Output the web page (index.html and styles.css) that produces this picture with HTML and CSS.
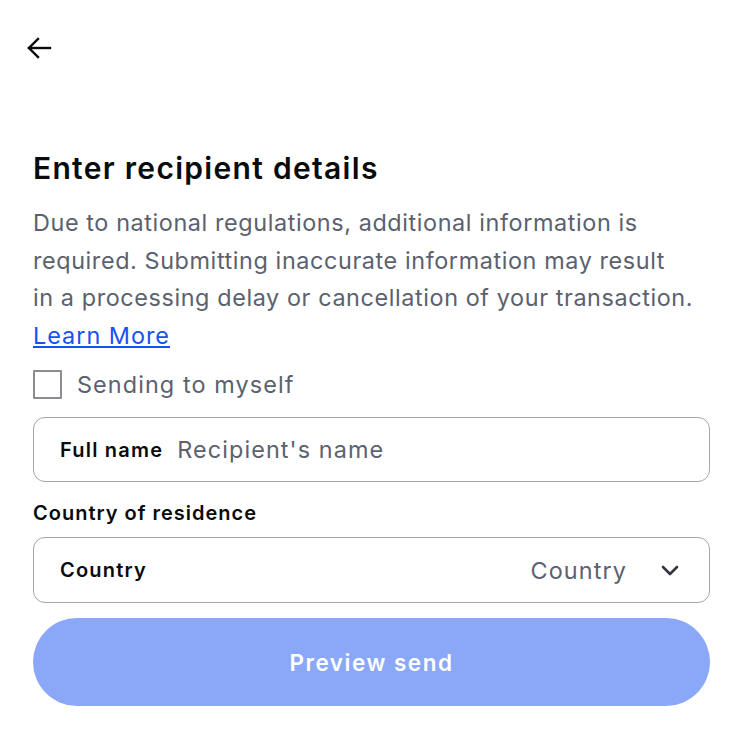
FILE: index.html
```html
<!DOCTYPE html>
<html lang="en">
<head>
    <meta charset="UTF-8">
    <meta name="viewport" content="width=device-width, initial-scale=1.0">
    <title>Enter recipient details</title>
    <link rel="stylesheet" href="styles.css">
</head>
<body>
    <div class="page">
        <button class="back" aria-label="Back">
            <svg width="28" height="28" viewBox="0 0 28 28" fill="none" stroke="#0a0b0d" stroke-width="2.4" stroke-linecap="square">
                <path d="M25 14H4"/>
                <path d="M13 5l-9 9 9 9"/>
            </svg>
        </button>

        <h1>Enter recipient details</h1>
        <p class="intro">
            Due to national regulations, additional information is<br>
            required. Submitting inaccurate information may result<br>
            in a processing delay or cancellation of your transaction.
            <a href="#">Learn More</a>
        </p>

        <label class="check">
            <span class="box"></span>
            <span>Sending to myself</span>
        </label>

        <div class="field">
            <span class="field-label">Full name</span>
            <span class="placeholder">Recipient's name</span>
        </div>

        <div class="section-label">Country of residence</div>
        <div class="field select">
            <span class="field-label">Country</span>
            <span class="placeholder">Country</span>
            <svg class="chevron" width="22" height="22" viewBox="0 0 22 22" fill="none" stroke="#32353d" stroke-width="2.6" stroke-linecap="round" stroke-linejoin="round">
                <path d="M4 8l7 7 7-7"/>
            </svg>
        </div>

        <button class="primary">Preview send</button>
    </div>
</body>
</html>
```

FILE: styles.css
```css
body {
    margin: 0;
    background: #fff;
    font-family: 'Inter', 'Noto Sans', sans-serif;
    color: #0a0b0d;
}

.page {
    padding: 34px 30px 0 33px;
}

.back {
    display: block;
    background: none;
    border: none;
    padding: 0;
    margin-left: -8px;
    width: 28px;
    height: 28px;
    cursor: pointer;
}

h1 {
    margin: 86px 0 0;
    font-size: 30px;
    font-weight: 600;
    letter-spacing: 1.3px;
    line-height: 40px;
}

.intro {
    margin: 16px -30px 0 0;
    font-size: 23.4px;
    line-height: 37.6px;
    letter-spacing: 0.6px;
    white-space: nowrap;
    color: #5b616e;
}

.intro a {
    display: block;
    width: max-content;
    letter-spacing: 1px;
    color: #1652f0;
}

.check {
    display: flex;
    align-items: center;
    gap: 15px;
    margin-top: 16px;
    font-size: 23.4px;
    letter-spacing: 1.1px;
    color: #5b616e;
    cursor: pointer;
}

.check .box {
    width: 25px;
    height: 25px;
    border: 2.5px solid #8a8d93;
    border-radius: 1px;
}

.field {
    box-sizing: border-box;
    display: flex;
    align-items: center;
    gap: 14px;
    height: 65px;
    margin-top: 18px;
    padding: 0 26px;
    border: 1.5px solid #a3a6ab;
    border-radius: 12px;
}

.field-label {
    font-size: 20px;
    font-weight: 600;
    letter-spacing: 1.2px;
}

.placeholder {
    font-size: 23.4px;
    letter-spacing: 1.1px;
    color: #5b616e;
}

.section-label {
    margin-top: 18px;
    font-size: 20px;
    font-weight: 600;
    letter-spacing: 1px;
    line-height: 26px;
}

.select {
    margin-top: 11px;
    height: 66px;
}

.select .placeholder {
    margin-left: auto;
}

.select .chevron {
    margin-left: 18px;
    margin-right: 2px;
}

.primary {
    display: block;
    width: 100%;
    height: 88px;
    margin-top: 15px;
    border: none;
    border-radius: 44px;
    background: #8ba7f7;
    color: #fff;
    font-family: inherit;
    font-size: 22.5px;
    font-weight: 600;
    letter-spacing: 1.5px;
    cursor: pointer;
}
```
